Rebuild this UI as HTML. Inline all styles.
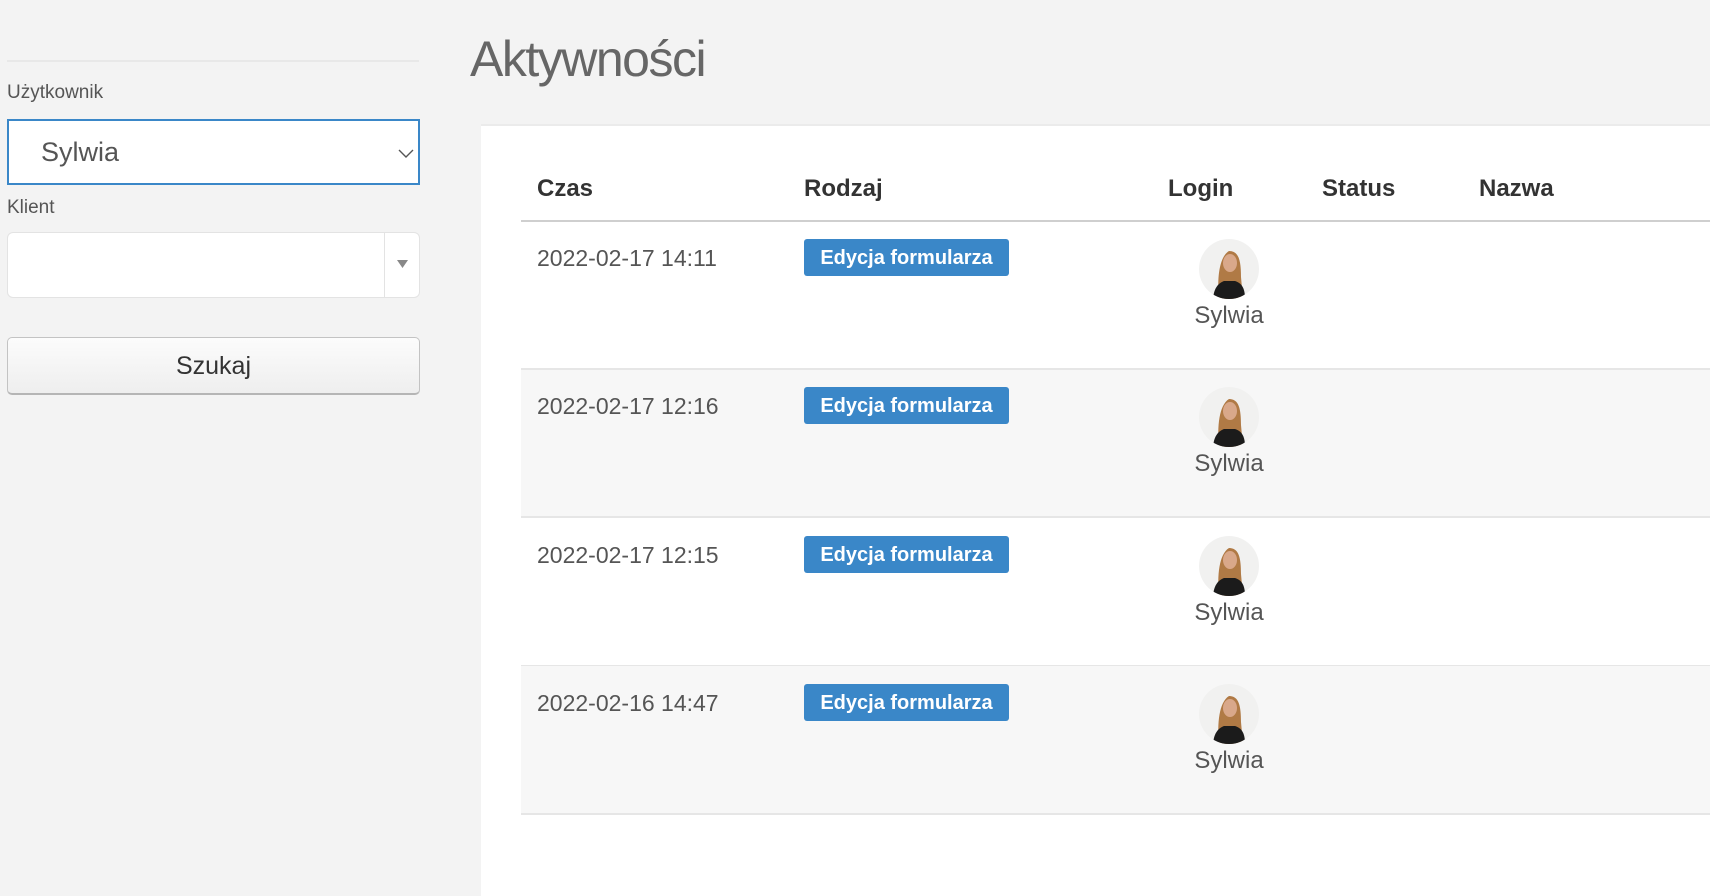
<!DOCTYPE html>
<html><head><meta charset="utf-8"><style>
*{box-sizing:border-box;margin:0;padding:0}
body{width:1710px;height:896px;background:#f3f3f3;font-family:"Liberation Sans",sans-serif;position:relative;overflow:hidden;color:#555}
.a{position:absolute}
.sep{left:7px;top:60px;width:412px;height:2px;background:#e8e8e8}
.lbl{font-size:19px;color:#555;left:7px}
.sel{left:7px;top:119px;width:413px;height:66px;background:#fff;border:2px solid #3a87c8}
.box{left:7px;top:232px;width:413px;height:66px;background:#fff;border:1px solid #e3e3e3;border-radius:6px}
.btn{left:7px;top:337px;width:413px;height:58px;background:linear-gradient(#fcfcfc,#eeeeee);border:1px solid #c3c3c3;border-bottom:2px solid #b5b5b5;border-radius:5px;text-align:center;font-size:25px;line-height:56px;color:#333}
h1{position:absolute;left:470px;top:30px;font-size:50px;color:#666;font-weight:normal;letter-spacing:-1.5px}
.panel{left:481px;top:124px;width:1229px;height:772px;background:#fff;border-top:2px solid #ebebeb}
.th{top:175px;font-size:24px;font-weight:bold;color:#333}
.hl{left:521px;top:220px;width:1189px;height:2px;background:#cfcfcf}
.row{left:521px;width:1189px;height:148px;border-bottom:2px solid #e6e6e6}
.dt{left:537px;font-size:23px;color:#555}
.bd{left:804px;width:205px;height:37px;background:#3a87c8;border-radius:3px;color:#fff;font-weight:bold;font-size:20px;text-align:center;line-height:39px}
.av{left:1199px;width:60px;height:60px;border-radius:50%;overflow:hidden}
.nm{left:1169px;width:120px;text-align:center;font-size:24px;color:#555}
</style></head><body>
<div class="a sep"></div>
<div class="a lbl" style="top:82px">Użytkownik</div>
<div class="a sel"><span class="a" style="left:32px;top:16px;font-size:27px;color:#555">Sylwia</span>
<svg class="a" style="left:388px;top:26px" width="18" height="12" viewBox="0 0 18 12"><path d="M2 3 L9 10 L16 3" fill="none" stroke="#555" stroke-width="1.4"/></svg></div>
<div class="a lbl" style="top:197px">Klient</div>
<div class="a box"><div class="a" style="left:376px;top:0;width:1px;height:64px;background:#e3e3e3"></div>
<svg class="a" style="left:389px;top:26px" width="12" height="10"><path d="M0 1 H11 L5.5 9 Z" fill="#888"/></svg></div>
<div class="a btn">Szukaj</div>
<h1>Aktywności</h1>
<div class="a panel"></div>
<div class="a th" style="left:537px">Czas</div>
<div class="a th" style="left:804px">Rodzaj</div>
<div class="a th" style="left:1168px">Login</div>
<div class="a th" style="left:1322px">Status</div>
<div class="a th" style="left:1479px">Nazwa</div>
<div class="a hl"></div>

<div class="a row" style="top:222px;background:#fff"></div>
<div class="a row" style="top:370px;background:#f7f7f7"></div>
<div class="a row" style="top:519px;background:#fff"></div>
<div class="a row" style="top:666px;background:#f7f7f7;height:149px"></div>

<div class="a dt" style="top:245px">2022-02-17 14:11</div>
<div class="a dt" style="top:393px">2022-02-17 12:16</div>
<div class="a dt" style="top:542px">2022-02-17 12:15</div>
<div class="a dt" style="top:690px">2022-02-16 14:47</div>

<div class="a bd" style="top:239px">Edycja formularza</div>
<div class="a bd" style="top:387px">Edycja formularza</div>
<div class="a bd" style="top:536px">Edycja formularza</div>
<div class="a bd" style="top:684px">Edycja formularza</div>

<svg width="0" height="0" style="position:absolute"><defs><symbol id="p" viewBox="0 0 60 60"><rect width="60" height="60" fill="#f1f1f0"/><path d="M20 60 C18 40 20 18 30 12 C40 12 42 22 42 38 L44 60Z" fill="#b07a45"/><ellipse cx="31" cy="24" rx="7" ry="9" fill="#d9a88a"/><path d="M14 60 C15 48 20 44 25 42 L36 42 C42 44 46 48 46 60Z" fill="#1b1b1b"/></symbol></defs></svg>
<svg class="a av" style="top:239px"><use href="#p"/></svg>
<svg class="a av" style="top:387px"><use href="#p"/></svg>
<svg class="a av" style="top:536px"><use href="#p"/></svg>
<svg class="a av" style="top:684px"><use href="#p"/></svg>

<div class="a nm" style="top:302px">Sylwia</div>
<div class="a nm" style="top:450px">Sylwia</div>
<div class="a nm" style="top:599px">Sylwia</div>
<div class="a nm" style="top:747px">Sylwia</div>
</body></html>
